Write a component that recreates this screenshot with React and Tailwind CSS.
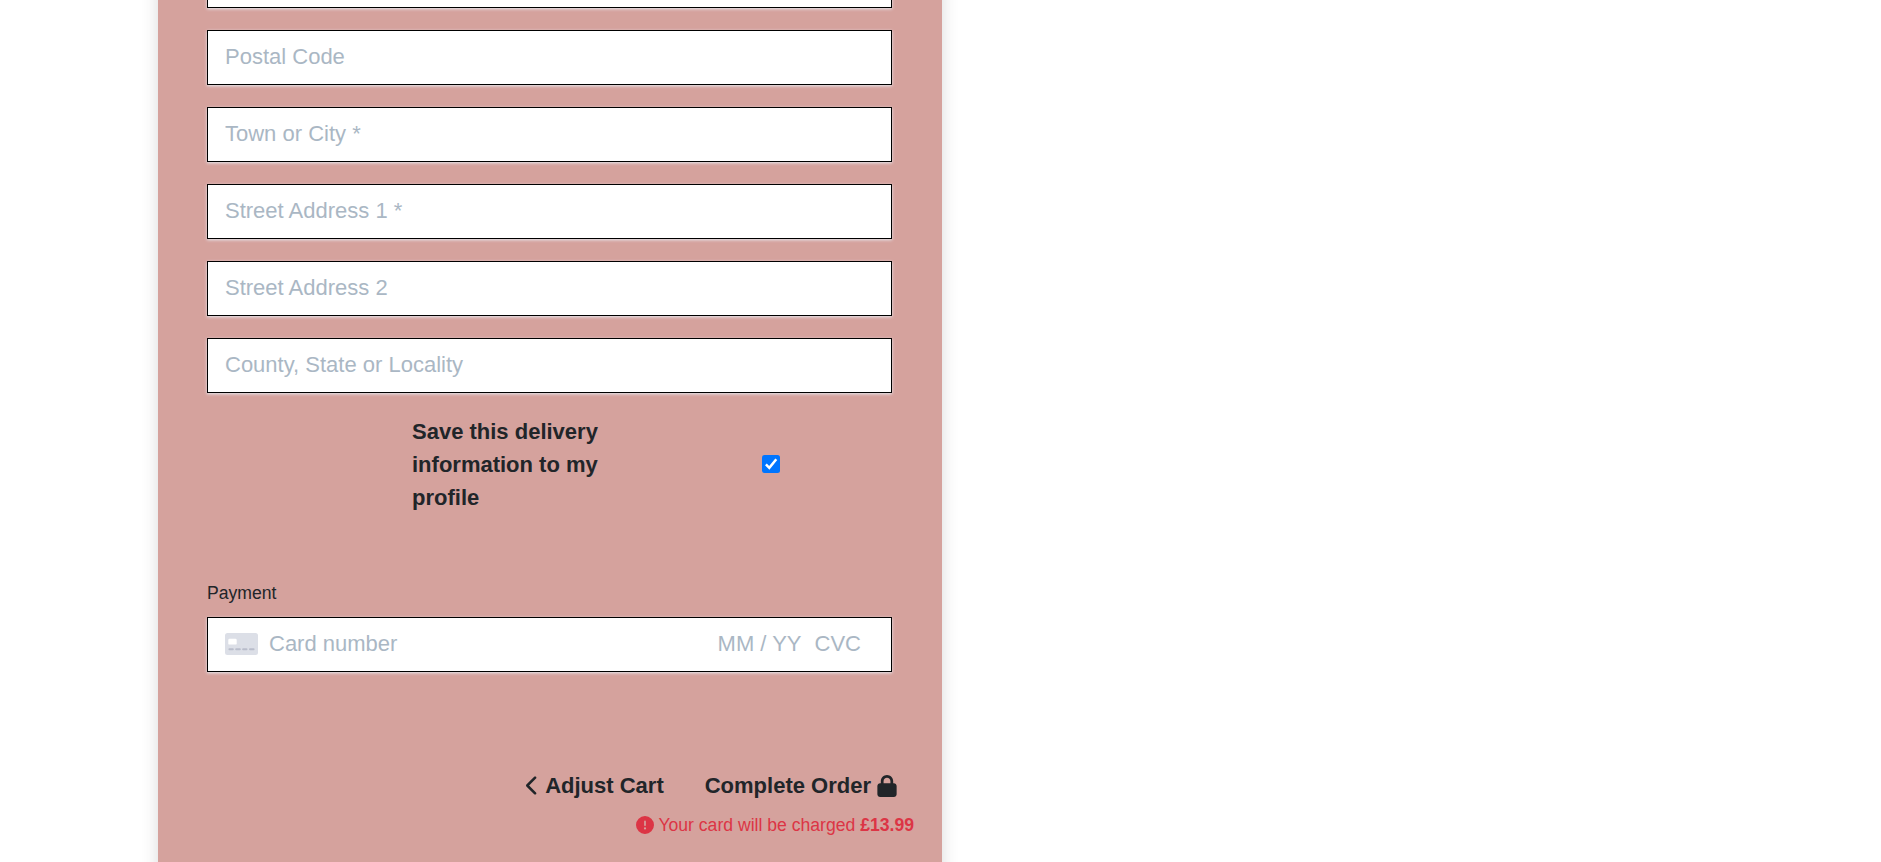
import { FaChevronLeft, FaLock, FaCircleExclamation } from "react-icons/fa6";

const box =
  "h-[55px] w-[685px] shrink-0 border border-black bg-white px-[17px] pb-[2px] shadow-[0_1px_3px_0_#e6ebf1]";

const fields = [
  "Postal Code",
  "Town or City *",
  "Street Address 1 *",
  "Street Address 2",
  "County, State or Locality",
];

function CardIcon() {
  return (
    <svg width="33" height="22" viewBox="0 0 33 22" className="mt-px shrink-0">
      <rect width="33" height="22" rx="2.5" fill="#dcdfe7" />
      <rect x="3.3" y="5.8" width="8.4" height="5.8" rx="1.2" fill="#fff" />
      <path
        d="M4.4 16.2h3.4M11.2 16.2h3.6M18.1 16.2h3.4M25 16.2h3.6"
        stroke="#b9bdcb"
        strokeWidth="2"
        strokeLinecap="round"
      />
    </svg>
  );
}

export default function App() {
  return (
    <div className="h-[862px] overflow-hidden bg-white font-['Liberation_Sans',Arial,sans-serif] text-[22px] leading-[33px] text-[#212529]">
      <main className="-mt-[47px] ml-[158px] flex h-[1000px] w-[784px] flex-col bg-[#d5a29d] pl-[49px] shadow-[0_8px_16px_rgba(0,0,0,0.15)]">
        <div className="flex flex-col gap-[22px]">
          <input className={box} aria-label="Country" />
          {fields.map((f) => (
            <input key={f} className={`${box} placeholder:text-[#aab7c4]`} placeholder={f} />
          ))}
        </div>

        <label className="mt-[22px] flex h-[99px] items-center pl-[205px] font-bold">
          <span className="w-[210px]">Save this delivery information to my profile</span>
          <span className="mb-px ml-[140px] flex size-[18px] items-center justify-center rounded-[2.5px] bg-[#0075ff]">
            <svg width="18" height="18" viewBox="0 0 18 18" fill="none">
              <path d="M3.9 9.4 7.3 12.8 14.3 4.2" stroke="#fff" strokeWidth="2.5" />
            </svg>
          </span>
        </label>

        <p className="mt-[66px] text-[17.6px] leading-[26px]">Payment</p>
        <div className={`${box} mt-[11px] flex items-center text-[#aab7c4]`}>
          <CardIcon />
          <span className="ml-[11px]">Card number</span>
          <span className="ml-auto">MM / YY</span>
          <span className="ml-[13px] mr-[13px]">CVC</span>
        </div>

        <div className="mt-[97px] flex w-[690px] items-center justify-end font-bold">
          <span className="mr-[41px] flex items-center gap-[6px]">
            <FaChevronLeft className="h-[21px] w-[13px]" />
            Adjust Cart
          </span>
          <span className="flex items-center gap-[6px]">
            Complete Order
            <FaLock className="h-[22px] w-[20px]" />
          </span>
        </div>
        <p className="mt-[10px] flex w-[707px] items-center justify-end text-[17.6px] leading-[26px] text-[#dc3545]">
          <FaCircleExclamation className="mr-[4px] size-[18px]" />
          <span>
            Your card will be charged <strong>£13.99</strong>
          </span>
        </p>
      </main>
    </div>
  );
}
